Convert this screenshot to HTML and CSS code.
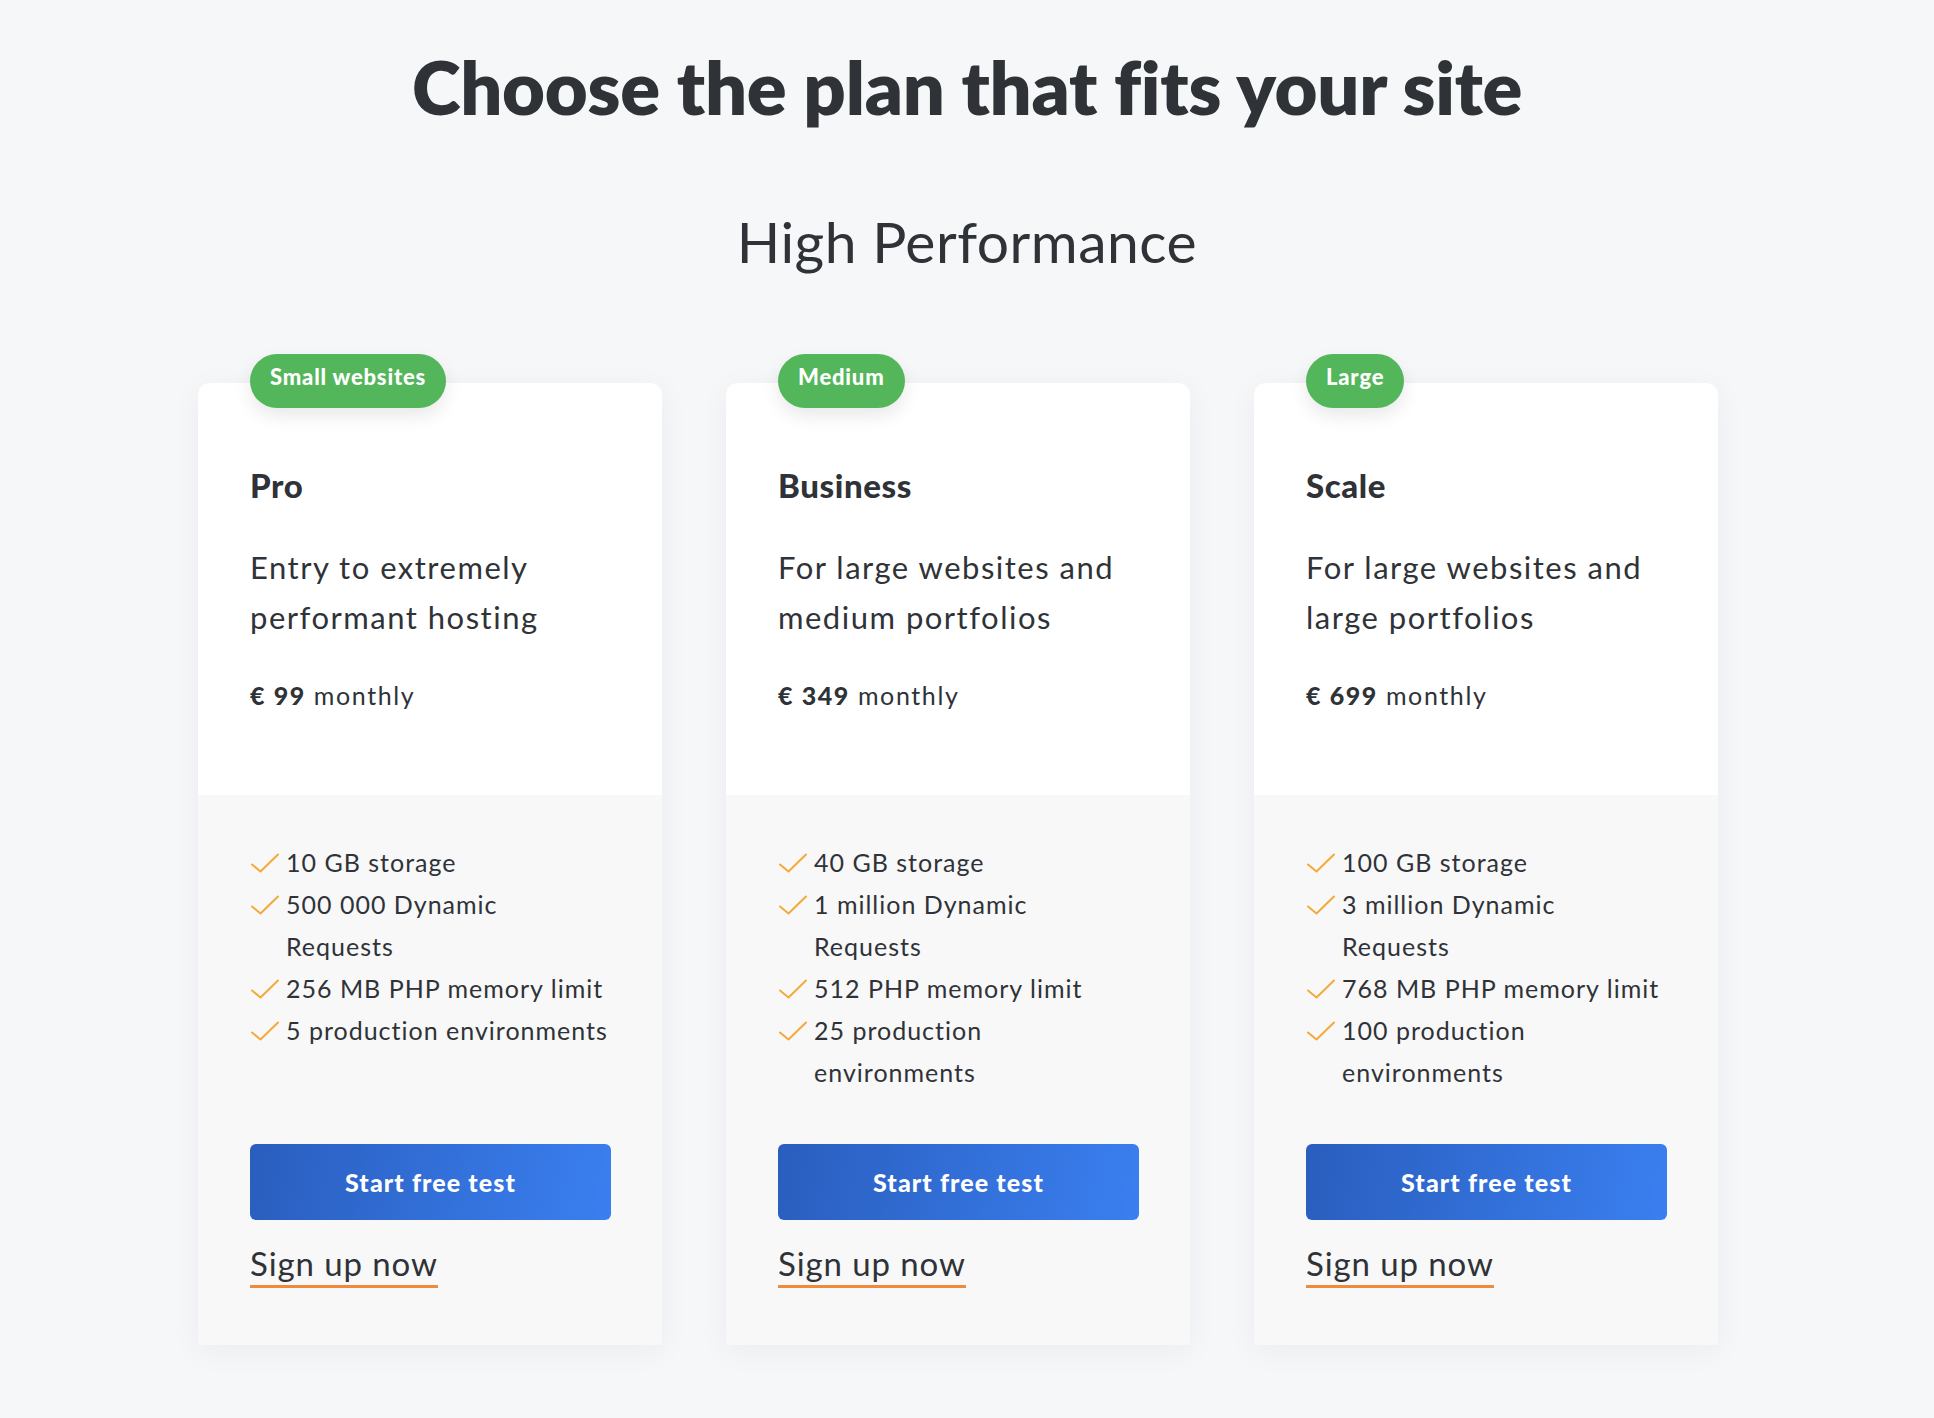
FILE: index.html
```html
<!DOCTYPE html>
<html lang="en">
<head>
<meta charset="utf-8">
<title>Choose the plan that fits your site</title>
<link rel="stylesheet" href="styles.css">
</head>
<body>
<main class="page">
  <h1 class="title">Choose the plan that fits your site</h1>
  <h2 class="subtitle">High Performance</h2>
  <section class="plans">
    <article class="card">
      <div class="card-top">
        <span class="badge">Small websites</span>
        <h3 class="plan-name">Pro</h3>
        <p class="plan-desc">Entry to extremely<br>performant hosting</p>
        <p class="price"><strong>€ 99</strong> monthly</p>
      </div>
      <div class="card-bottom">
        <ul class="features">
          <li><svg class="check" viewBox="0 0 28 20"><path d="M1 11.5 L9.5 18.5 L27 1.5"/></svg><span>10 GB storage</span></li>
          <li><svg class="check" viewBox="0 0 28 20"><path d="M1 11.5 L9.5 18.5 L27 1.5"/></svg><span>500 000 Dynamic<br>Requests</span></li>
          <li><svg class="check" viewBox="0 0 28 20"><path d="M1 11.5 L9.5 18.5 L27 1.5"/></svg><span>256 MB PHP memory limit</span></li>
          <li><svg class="check" viewBox="0 0 28 20"><path d="M1 11.5 L9.5 18.5 L27 1.5"/></svg><span>5 production environments</span></li>
        </ul>
        <a class="btn" href="#">Start free test</a>
        <a class="signup" href="#">Sign up now</a>
      </div>
    </article>
    <article class="card">
      <div class="card-top">
        <span class="badge">Medium</span>
        <h3 class="plan-name">Business</h3>
        <p class="plan-desc">For large websites and<br>medium portfolios</p>
        <p class="price"><strong>€ 349</strong> monthly</p>
      </div>
      <div class="card-bottom">
        <ul class="features">
          <li><svg class="check" viewBox="0 0 28 20"><path d="M1 11.5 L9.5 18.5 L27 1.5"/></svg><span>40 GB storage</span></li>
          <li><svg class="check" viewBox="0 0 28 20"><path d="M1 11.5 L9.5 18.5 L27 1.5"/></svg><span>1 million Dynamic<br>Requests</span></li>
          <li><svg class="check" viewBox="0 0 28 20"><path d="M1 11.5 L9.5 18.5 L27 1.5"/></svg><span>512 PHP memory limit</span></li>
          <li><svg class="check" viewBox="0 0 28 20"><path d="M1 11.5 L9.5 18.5 L27 1.5"/></svg><span>25 production<br>environments</span></li>
        </ul>
        <a class="btn" href="#">Start free test</a>
        <a class="signup" href="#">Sign up now</a>
      </div>
    </article>
    <article class="card">
      <div class="card-top">
        <span class="badge">Large</span>
        <h3 class="plan-name">Scale</h3>
        <p class="plan-desc">For large websites and<br>large portfolios</p>
        <p class="price"><strong>€ 699</strong> monthly</p>
      </div>
      <div class="card-bottom">
        <ul class="features">
          <li><svg class="check" viewBox="0 0 28 20"><path d="M1 11.5 L9.5 18.5 L27 1.5"/></svg><span>100 GB storage</span></li>
          <li><svg class="check" viewBox="0 0 28 20"><path d="M1 11.5 L9.5 18.5 L27 1.5"/></svg><span>3 million Dynamic<br>Requests</span></li>
          <li><svg class="check" viewBox="0 0 28 20"><path d="M1 11.5 L9.5 18.5 L27 1.5"/></svg><span>768 MB PHP memory limit</span></li>
          <li><svg class="check" viewBox="0 0 28 20"><path d="M1 11.5 L9.5 18.5 L27 1.5"/></svg><span>100 production<br>environments</span></li>
        </ul>
        <a class="btn" href="#">Start free test</a>
        <a class="signup" href="#">Sign up now</a>
      </div>
    </article>
  </section>
</main>
</body>
</html>
```

FILE: styles.css
```css
* { box-sizing: border-box; }

html, body {
  margin: 0;
  padding: 0;
  background: #f6f7f9;
}

body {
  font-family: "Lato", "Open Sans", "Liberation Sans", sans-serif;
  color: #2f3338;
}

.page {
  padding-top: 43px;
  padding-bottom: 72px;
}

.title {
  margin: 0;
  text-align: center;
  font-size: 74px;
  line-height: 1.2;
  font-weight: 800;
  letter-spacing: -0.25px;
}

.subtitle {
  margin: 75px 0 0;
  text-align: center;
  font-size: 57px;
  line-height: 1.2;
  font-weight: 400;
  letter-spacing: 0.5px;
}

.plans {
  margin: 108px 0 0 198px;
  width: 1520px;
  display: grid;
  grid-template-columns: repeat(3, 464px);
  column-gap: 64px;
}

.card {
  display: flex;
  flex-direction: column;
  border-radius: 12px 12px 0 0;
  box-shadow: 0 6px 30px rgba(30, 40, 60, 0.05);
}

.card-top {
  position: relative;
  background: #ffffff;
  border-radius: 12px 12px 0 0;
  padding: 83px 52px 85px;
}

.badge {
  position: absolute;
  top: -29px;
  left: 52px;
  height: 54px;
  padding: 0 20px;
  border-radius: 27px;
  background: #53b65a;
  color: #ffffff;
  font-size: 22px;
  font-weight: 900;
  letter-spacing: 0.8px;
  line-height: 46px;
  box-shadow: 0 8px 18px rgba(0, 0, 0, 0.09);
  white-space: nowrap;
}

.plan-name {
  margin: 0;
  font-size: 33px;
  line-height: 1.2;
  font-weight: 900;
  letter-spacing: 0.6px;
}

.plan-desc {
  margin: 36px 0 0;
  font-size: 31px;
  line-height: 50px;
  font-weight: 400;
  letter-spacing: 1.5px;
}

.price {
  margin: 38px 0 0;
  font-size: 25px;
  line-height: 1.2;
  letter-spacing: 1.6px;
}

.price strong { font-weight: 900; }

.card-bottom {
  flex: 1;
  display: flex;
  flex-direction: column;
  align-items: flex-start;
  background: #f8f8f8;
  padding: 46px 52px 57px;
}

.features {
  flex: 1;
  margin: 0;
  padding: 0;
  list-style: none;
  font-size: 25px;
  line-height: 42px;
  letter-spacing: 1px;
}

.features li {
  display: flex;
  align-items: flex-start;
  white-space: nowrap;
}

.check {
  flex: none;
  width: 28px;
  height: 20px;
  margin: 12px 7px 0 1px;
  fill: none;
  stroke: #f5a93a;
  stroke-width: 2;
  stroke-linecap: round;
  stroke-linejoin: round;
}

.btn {
  margin-top: 51px;
  width: 361px;
  height: 76px;
  border-radius: 6px;
  background: linear-gradient(100deg, #2a5ebe 0%, #3a7ff0 100%);
  color: #ffffff;
  font-size: 25px;
  font-weight: 900;
  letter-spacing: 1.1px;
  text-decoration: none;
  display: flex;
  align-items: center;
  justify-content: center;
}

.signup {
  margin-top: 24px;
  display: inline-block;
  font-size: 33px;
  line-height: 1.2;
  letter-spacing: 0.9px;
  color: #2f3338;
  text-decoration: none;
  padding-bottom: 2px;
  border-bottom: 3px solid #ef8a3d;
}
```
